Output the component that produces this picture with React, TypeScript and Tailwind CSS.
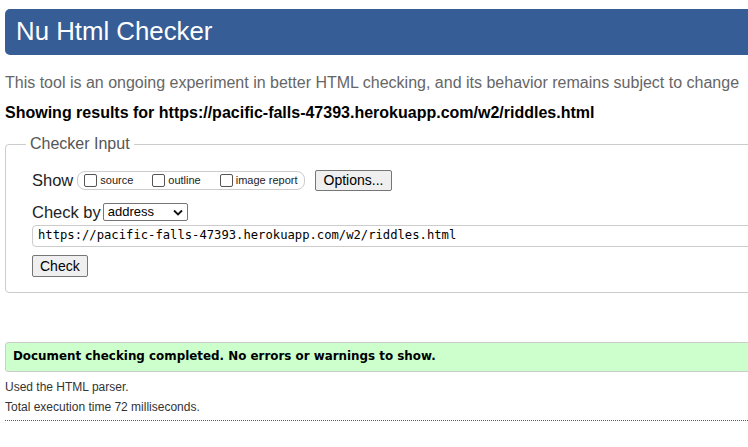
export default function App() {
  return (
    <div className="h-[447px] w-[748px] overflow-hidden bg-white font-['Liberation_Sans',Arial,sans-serif]">
      <div className="w-[800px] pl-[5px] pt-[9px]">
        <h1 className="flex h-[46px] items-center rounded-l-[5px] bg-[#365d95] pl-[11px] text-[25.8px] leading-none text-white">
          Nu Html Checker
        </h1>
        <p className="mt-[18px] text-[16px] leading-[20px] text-[#666]">
          This tool is an ongoing experiment in better HTML checking, and its behavior remains subject to change
        </p>
        <p className="mt-[10px] text-[16px] font-bold leading-[20px] text-black">
          Showing results for https://pacific-falls-47393.herokuapp.com/w2/riddles.html
        </p>

        <fieldset className="mt-[12px] h-[158px] rounded-[4px] border border-[#ccc] px-0 pt-[15px]">
          <legend className="ml-[20px] px-[4px] text-[16px] leading-[18px] text-[#555]">Checker Input</legend>
          <div className="pl-[26px]">
            <div className="flex items-center">
              <span className="text-[16.5px] text-[#222]">Show</span>
              <div className="ml-[4px] flex h-[19px] items-center gap-[19px] rounded-[8px] border border-[#ccc] pl-[6px] pr-[6px] text-[11px] text-[#222]">
                <label className="flex items-center gap-[3px]">
                  <span className="inline-block h-[13px] w-[13px] rounded-[2px] border border-[#555] bg-white" />
                  source
                </label>
                <label className="flex items-center gap-[3px]">
                  <span className="inline-block h-[13px] w-[13px] rounded-[2px] border border-[#555] bg-white" />
                  outline
                </label>
                <label className="flex items-center gap-[3px]">
                  <span className="inline-block h-[13px] w-[13px] rounded-[2px] border border-[#555] bg-white" />
                  image report
                </label>
              </div>
              <button className="ml-[10px] h-[21px] rounded-[2px] border border-[#767676] bg-[#efefef] px-[8px] text-[14px] leading-none text-black">
                Options...
              </button>
            </div>

            <div className="mt-[7px] flex items-center">
              <span className="text-[16.5px] text-[#222]">Check by</span>
              <div className="ml-[2px] flex h-[18px] w-[85px] items-center justify-between rounded-[2px] border border-[#767676] bg-white pl-[4px] pr-[4px] text-[13px] text-black">
                address
                <svg width="10" height="7" viewBox="0 0 10 7" fill="none">
                  <path d="M1 1.5 5 5.5 9 1.5" stroke="#111" strokeWidth="1.8" />
                </svg>
              </div>
            </div>

            <div className="mt-0 flex h-[22px] w-[760px] items-center rounded-[4px] border border-[#ccc] pl-[5px] font-['DejaVu_Sans_Mono','Liberation_Mono',monospace] text-[12.2px] text-black">
              https://pacific-falls-47393.herokuapp.com/w2/riddles.html
            </div>

            <button className="mt-[8px] h-[22px] rounded-[2px] border border-[#767676] bg-[#efefef] px-[7px] text-[14px] leading-none text-black">
              Check
            </button>
          </div>
        </fieldset>

        <div className="mt-[49px] flex h-[30px] items-center rounded-l-[3px] border border-[#ccc] bg-[#ccffcc] pl-[7px] font-['DejaVu_Sans',Verdana,sans-serif] text-[11.9px] font-bold text-black">
          Document checking completed. No errors or warnings to show.
        </div>
        <p className="mt-[6px] text-[12px] leading-[18px] text-[#333]">Used the HTML parser.</p>
        <p className="mt-[2px] text-[12px] leading-[18px] text-[#333]">Total execution time 72 milliseconds.</p>
        <div className="mt-[4px] border-t border-dotted border-[#555]" />
      </div>
    </div>
  );
}
